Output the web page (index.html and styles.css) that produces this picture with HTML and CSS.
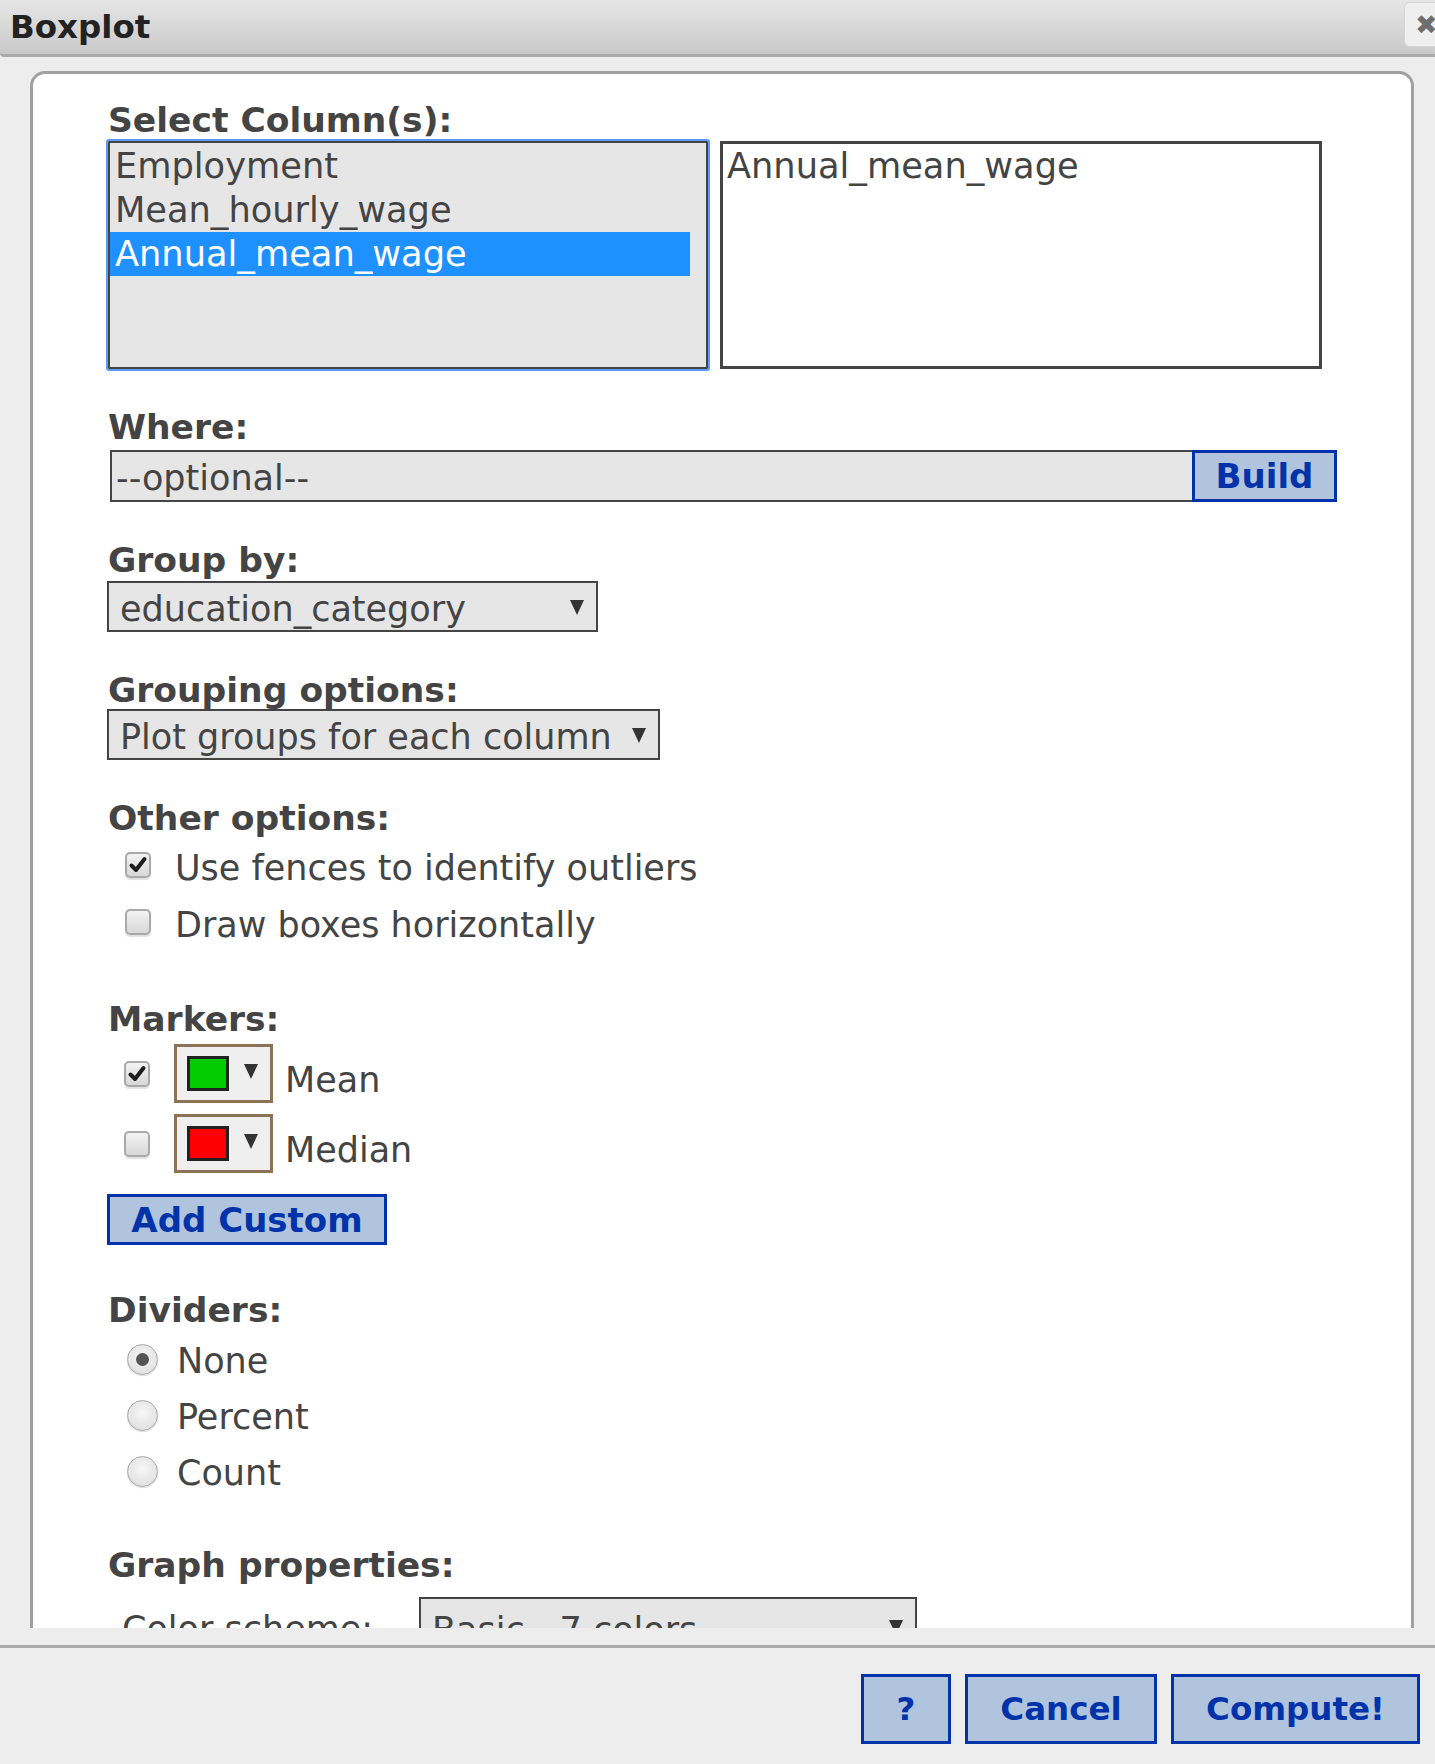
FILE: index.html
```html
<!DOCTYPE html>
<html>
<head>
<meta charset="utf-8">
<title>Boxplot</title>
<link rel="stylesheet" href="styles.css">
</head>
<body>
<div class="titlebar">
  <span class="title">Boxplot</span>
  <span class="close">✖</span>
</div>
<div class="main">
  <div class="panel">
    <div class="label">Select Column(s):</div>
    <div class="lists">
      <div class="listbox src">
        <div class="opt">Employment</div>
        <div class="opt">Mean_hourly_wage</div>
        <div class="opt sel">Annual_mean_wage</div>
      </div>
      <div class="listbox dst">
        <div class="opt">Annual_mean_wage</div>
      </div>
    </div>

    <div class="label sec">Where:</div>
    <div class="where">
      <div class="input">--optional--</div>
      <div class="btn build">Build</div>
    </div>

    <div class="label sec">Group by:</div>
    <div class="select w1">
      <span>education_category</span>
      <svg class="arrow" width="14" height="15" viewBox="0 0 14 15"><polygon points="0,0 14,0 7,15"/></svg>
    </div>

    <div class="label sec">Grouping options:</div>
    <div class="select w2">
      <span>Plot groups for each column</span>
      <svg class="arrow" width="14" height="15" viewBox="0 0 14 15"><polygon points="0,0 14,0 7,15"/></svg>
    </div>

    <div class="label sec">Other options:</div>
    <div class="checks">
      <div class="crow">
        <span class="cb"><svg width="22" height="22" viewBox="0 0 22 22"><path d="M4.5 11.5 L9 16 L17.5 5" fill="none" stroke="#1e1e1e" stroke-width="4" stroke-linecap="round" stroke-linejoin="round"/></svg></span>
        <span class="ctext">Use fences to identify outliers</span>
      </div>
      <div class="crow">
        <span class="cb"></span>
        <span class="ctext">Draw boxes horizontally</span>
      </div>
    </div>

    <div class="label sec-big">Markers:</div>
    <div class="markers">
      <div class="mrow">
        <span class="cb"><svg width="22" height="22" viewBox="0 0 22 22"><path d="M4.5 11.5 L9 16 L17.5 5" fill="none" stroke="#1e1e1e" stroke-width="4" stroke-linecap="round" stroke-linejoin="round"/></svg></span>
        <span class="colorbox"><span class="swatch green"></span><svg class="carrow" width="14" height="15" viewBox="0 0 14 15"><polygon points="0,0 14,0 7,15"/></svg></span>
        <span class="mtext">Mean</span>
      </div>
      <div class="mrow">
        <span class="cb"></span>
        <span class="colorbox"><span class="swatch red"></span><svg class="carrow" width="14" height="15" viewBox="0 0 14 15"><polygon points="0,0 14,0 7,15"/></svg></span>
        <span class="mtext">Median</span>
      </div>
    </div>
    <div class="btn addcustom">Add Custom</div>

    <div class="label sec-div">Dividers:</div>
    <div class="radios">
      <div class="rrow"><span class="rb on"></span><span class="rtext">None</span></div>
      <div class="rrow"><span class="rb"></span><span class="rtext">Percent</span></div>
      <div class="rrow"><span class="rb"></span><span class="rtext">Count</span></div>
    </div>

    <div class="label sec-graph">Graph properties:</div>
    <div class="prow">
      <span class="plabel">Color scheme:</span>
      <div class="select w3">
        <span>Basic - 7 colors</span>
        <svg class="arrow" width="14" height="15" viewBox="0 0 14 15"><polygon points="0,0 14,0 7,15"/></svg>
      </div>
    </div>
  </div>
</div>
<div class="footer">
  <div class="fbtn q">?</div>
  <div class="fbtn cancel">Cancel</div>
  <div class="fbtn compute">Compute!</div>
</div>
</body>
</html>
```

FILE: styles.css
```css
* { box-sizing: border-box; }
html, body { margin: 0; padding: 0; }
body {
  width: 1435px;
  height: 1764px;
  overflow: hidden;
  background: #ededed;
  font-family: "DejaVu Sans", Verdana, sans-serif;
  color: #444;
}

.titlebar {
  height: 57px;
  border-bottom: 3px solid #aaa;
  background: linear-gradient(#e6e6e6, #c9c9c9);
  display: flex;
  align-items: flex-start;
  padding-left: 10px;
  border-bottom-left-radius: 4px;
}
.title {
  font-weight: 700;
  font-size: 32.5px;
  line-height: 54px;
  color: #222;
}
.close {
  margin-left: auto;
  margin-right: -13px;
  margin-top: 2px;
  width: 44px;
  height: 45px;
  background: #efefef;
  border: 1px solid #d6d6d6;
  border-radius: 6px;
  color: #6e6e6e;
  font-size: 27px;
  line-height: 43px;
  padding-left: 10px;
}

.main {
  height: 1588px;
  padding: 14px 21px 17px 30px;
}
.panel {
  height: 1557px;
  border: 3px solid #a0a0a0;
  border-bottom: 0;
  border-radius: 15px 15px 0 0;
  background: #fff;
  overflow: hidden;
  padding: 28px 0 0 75px;
}

.label {
  font-weight: 700;
  font-size: 34.5px;
  line-height: 37px;
  color: #444;
}
.sec { margin-top: 40px; }
.sec-big { margin-top: 51px; }
.sec-div { margin-top: 47px; }
.sec-graph { margin-top: 48px; }

.lists {
  display: flex;
  gap: 12px;
  margin-top: 2px;
}
.listbox {
  height: 228px;
  border: 3px solid #444;
  padding-top: 0;
  font-size: 35.2px;
  line-height: 44px;
}
.src {
  width: 600px;
  background: #e6e6e6;
  border-width: 2px;
  padding-top: 1px;
  outline: 2px solid #5a9cf5;
  border-radius: 1px;
  padding-right: 16px;
}
.dst {
  width: 602px;
  background: #fff;
}
.opt { padding-left: 5px; white-space: nowrap; }
.dst .opt { padding-left: 4px; }
.sel { background: #1e90ff; color: #fff; }

.where {
  display: flex;
  margin-top: 4px;
  margin-left: 2px;
}
.input {
  width: 1082px;
  height: 52px;
  border: 2px solid #444;
  border-right: 0;
  background: #e6e6e6;
  font-size: 35px;
  line-height: 40px;
  padding: 6px 0 0 4px;
}
.btn {
  border: 3px solid #0033aa;
  background: #b0c4de;
  color: #0033aa;
  font-weight: 700;
  font-size: 34px;
  display: flex;
  align-items: center;
  justify-content: center;
}
.build {
  width: 145px;
  height: 52px;
}

.select {
  margin-top: 2px;
  margin-left: -1px;
  height: 51px;
  border: 2px solid #444;
  background: #e6e6e6;
  display: flex;
  align-items: center;
  justify-content: space-between;
  padding: 5px 12px 0 11px;
  font-size: 35px;
  white-space: nowrap;
}
.select .arrow { margin-top: -4px; }
.w1 { width: 491px; }
.w2 { width: 553px; margin-top: 0; }
.w3 { width: 498px; margin: 0; height: 54px; padding-top: 11px; }
.arrow polygon, .carrow polygon { fill: #333; }

.checks { margin-top: 6px; }
.crow {
  display: flex;
  align-items: center;
  height: 50px;
  padding-left: 17px;
  font-size: 35px;
}
.crow + .crow { margin-top: 7px; }
.crow .cb { margin-bottom: 6px; }
.cb {
  width: 26px;
  height: 26px;
  flex: none;
  border: 2px solid #a9a9a9;
  border-radius: 5px;
  background: linear-gradient(#f3f3f3, #d8d8d8);
  box-shadow: 0 2px 1px rgba(0, 0, 0, 0.12);
  display: flex;
  align-items: center;
  justify-content: center;
}
.ctext { margin-left: 24px; white-space: nowrap; }

.markers { margin-top: 6px; }
.mrow {
  display: flex;
  align-items: center;
  height: 59px;
  padding-left: 16px;
  font-size: 35px;
}
.mrow + .mrow { margin-top: 11px; }
.colorbox {
  margin-left: 24px;
  width: 99px;
  height: 59px;
  border: 3px solid #8c7358;
  background: #efefef;
  display: flex;
  align-items: center;
  padding-left: 10px;
}
.swatch {
  width: 42px;
  height: 35px;
  border: 3px solid #222;
}
.green { background: #00cc00; }
.red { background: #ff0000; }
.carrow { margin-left: 15px; margin-top: -4px; }
.mtext { margin-left: 12px; padding-top: 12px; }

.addcustom {
  margin-top: 21px;
  margin-left: -1px;
  width: 280px;
  height: 51px;
}

.radios { margin-top: 2px; }
.rrow {
  display: flex;
  align-items: center;
  height: 56px;
  padding-left: 19px;
  font-size: 35px;
}
.rb {
  width: 31px;
  height: 31px;
  flex: none;
  border-radius: 50%;
  border: 1px solid #a8a8a8;
  background: radial-gradient(circle at 50% 40%, #f8f8f8, #d9d9d9);
  box-shadow: 0 1px 1px rgba(0, 0, 0, 0.15);
  display: flex;
  align-items: center;
  justify-content: center;
}
.rb.on::after {
  content: "";
  width: 13px;
  height: 13px;
  border-radius: 50%;
  background: #555;
}
.rtext { margin-left: 19px; padding-top: 4px; }

.prow {
  margin-top: 13px;
  display: flex;
  align-items: flex-start;
  padding-left: 14px;
  font-size: 35px;
}
.plabel {
  width: 297px;
  padding-top: 12px;
  white-space: nowrap;
}

.footer {
  height: 119px;
  border-top: 3px solid #aaa;
  padding: 26px 15px 0 0;
  display: flex;
  justify-content: flex-end;
  align-items: flex-start;
  gap: 14px;
}
.fbtn {
  height: 70px;
  border: 3px solid #0033aa;
  background: #b0c4de;
  color: #0033aa;
  font-weight: 700;
  font-size: 32.5px;
  display: flex;
  align-items: center;
  justify-content: center;
}
.q { width: 90px; }
.cancel { width: 192px; }
.compute { width: 249px; }
```
